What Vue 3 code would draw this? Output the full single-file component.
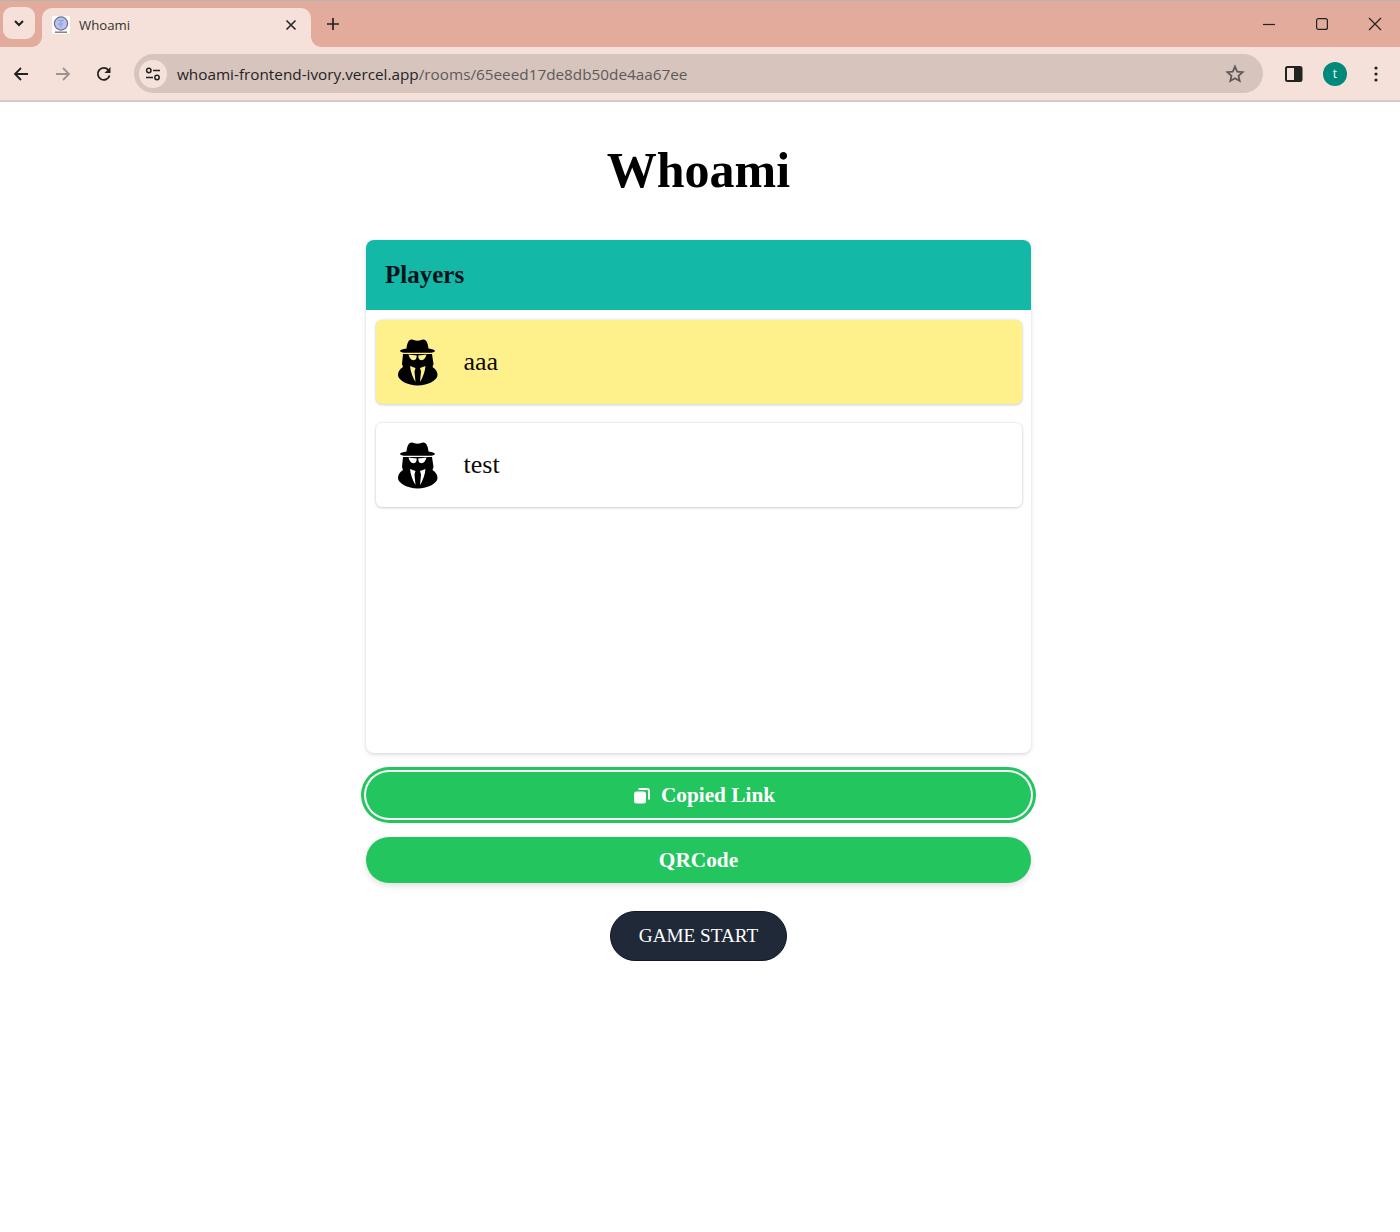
<template>
  <div class="browser">
    <div class="tabstrip">
      <button class="tab-search">
        <svg width="12" height="12" viewBox="0 0 12 12"><path d="M2 4l4 4 4-4" fill="none" stroke="#1f1f1f" stroke-width="2" /></svg>
      </button>
      <div class="tab">
        <svg class="favicon" width="18" height="18" viewBox="0 0 18 18">
          <rect width="18" height="18" fill="#fff" />
          <circle cx="9" cy="7.5" r="6.6" fill="#c5bdf0" stroke="#6a7290" stroke-width="1.2" />
          <path d="M6 4.5h6M9 4.5v7M6 8h5" stroke="#7fb2e0" stroke-width="1.4" fill="none" />
          <rect x="3" y="15.5" width="12" height="1.4" fill="#777" />
        </svg>
        <span class="tab-title">{{ tabTitle }}</span>
        <svg class="tab-close" width="12" height="12" viewBox="0 0 12 12"><path d="M1.5 1.5l9 9M10.5 1.5l-9 9" stroke="#2a2a2a" stroke-width="1.7" /></svg>
      </div>
      <svg class="new-tab" width="14" height="14" viewBox="0 0 14 14"><path d="M7 1v12M1 7h12" stroke="#222" stroke-width="1.7" /></svg>
      <div class="win-controls">
        <svg width="14" height="14" viewBox="0 0 14 14"><path d="M1 7.5h12" stroke="#222" stroke-width="1.2" /></svg>
        <svg width="14" height="14" viewBox="0 0 14 14"><rect x="1.6" y="1.6" width="10.8" height="10.8" rx="2" fill="none" stroke="#222" stroke-width="1.2" /></svg>
        <svg width="14" height="14" viewBox="0 0 14 14"><path d="M1 1l12 12M13 1L1 13" stroke="#222" stroke-width="1.2" /></svg>
      </div>
    </div>
    <div class="toolbar">
      <div class="nav-icons">
        <svg width="16" height="16" viewBox="0 0 16 16"><path d="M15 8H2.5M8 2L2 8l6 6" fill="none" stroke="#222" stroke-width="1.8" /></svg>
        <svg width="16" height="16" viewBox="0 0 16 16"><path d="M1 8h12.5M8 2l6 6-6 6" fill="none" stroke="#9a9490" stroke-width="1.8" /></svg>
        <svg width="16" height="16" viewBox="0 0 16 16"><path d="M13.6 9.5A6 6 0 1 1 12.4 4" fill="none" stroke="#222" stroke-width="1.8" /><path d="M14.5 1v6h-6z" fill="#222" /></svg>
      </div>
      <div class="omnibox">
        <div class="site-info">
          <svg width="16" height="14" viewBox="0 0 16 14">
            <circle cx="3.8" cy="3.5" r="2.2" fill="none" stroke="#222" stroke-width="1.5" />
            <path d="M8 3.5h7M1 10.5h7" stroke="#222" stroke-width="1.6" />
            <circle cx="12" cy="10.5" r="2.2" fill="none" stroke="#222" stroke-width="1.5" />
          </svg>
        </div>
        <span class="url">{{ urlHost }}<span class="url-path">{{ urlPath }}</span></span>
        <svg class="star" width="20" height="20" viewBox="0 0 20 20"><path d="M10 2.6l2.2 5 5.4.5-4.1 3.600 1.2 5.300L10 14.200l-4.700 2.800 1.200-5.300L2.400 8.100l5.400-.5z" fill="none" stroke="#5f5a58" stroke-width="1.8" /></svg>
      </div>
      <div class="tool-icons">
        <svg width="18" height="16" viewBox="0 0 18 16"><rect x="1" y="1" width="15.500" height="14" rx="1.500" fill="none" stroke="#222" stroke-width="2" /><rect x="9" y="1" width="8" height="14" fill="#222" /></svg>
        <div class="avatar">t</div>
        <svg width="4" height="16" viewBox="0 0 4 16"><circle cx="2" cy="2" r="1.600" fill="#222" /><circle cx="2" cy="8" r="1.600" fill="#222" /><circle cx="2" cy="14" r="1.600" fill="#222" /></svg>
      </div>
    </div>
  </div>

  <main class="page">
    <h1 class="title">Whoami</h1>

    <section class="card">
      <div class="card-header">Players</div>
      <ul class="player-list">
        <li v-for="p in players" :key="p.name" class="player" :class="{ me: p.me }">
          <svg class="spy" width="40" height="47" viewBox="0 0 40 47">
            <!-- hat -->
            <path d="M8.500 9.500C9 4.500 10.500 .4 13.500.4c2.200 0 3.800 1.300 6 1.300s3.800-1.300 6-1.300c3 0 4.500 4.100 5 9.100 3.500.6 6.500 1.500 6.500 2.400 0 .9-2 1.500-4 1.800H6c-2-.3-4-.9-4-1.800 0-.9 3-1.800 6.500-2.400z" fill="#000" />
            <!-- collar and coat -->
            <path d="M5 15h29l1.500 10-1 3C38 30 39.500 33 39.500 36c0 5-9.500 10.500-19.750 10.500S0 41 0 36c0-3 1.500-6 5-8l-1-3z" fill="#000" />
            <!-- glasses -->
            <path d="M10.500 15.500c2.500.5 5 .8 8 .8.6 2.300-.4 4.900-3 4.900-2.500 0-4.300-2.700-5-5.700zM28.500 15.500c-2.500.5-5 .8-8 .8-.6 2.300.4 4.900 3 4.900 2.500 0 4.300-2.700 5-5.700z" fill="currentColor" />
            <!-- lapels -->
            <path d="M12 27l5.500 2 -1 3.500 1 10.500c-2.500-4-5-10-5.500-16zM27.500 27l-5.500 2 1 3.500 -1 10.500c2.500-4 5-10 5.500-16z" fill="currentColor" />
          </svg>
          <span class="player-name">{{ p.name }}</span>
        </li>
      </ul>
    </section>

    <button class="link-btn focused">
      <svg width="16" height="16" viewBox="0 0 16 16">
        <rect x="0" y="3.500" width="12" height="12" rx="2.500" fill="#fff" />
        <path d="M4.500 1h8.500a2 2 0 0 1 2 2v8.500" fill="none" stroke="#fff" stroke-width="2" />
      </svg>
      Copied Link
    </button>
    <button class="link-btn">QRCode</button>
    <button class="start-btn">GAME START</button>
  </main>
</template>

<script setup>
import { ref } from 'vue'

const tabTitle = 'Whoami'
const urlHost = 'whoami-frontend-ivory.vercel.app'
const urlPath = '/rooms/65eeed17de8db50de4aa67ee'

const players = ref([
  { name: 'aaa', me: true },
  { name: 'test', me: false }
])
</script>

<style>
html, body {
  margin: 0;
  background: #fff;
}
</style>

<style scoped>
.browser {
  height: 102px;
  box-sizing: border-box;
  display: flex;
  flex-direction: column;
  border-top: 1px solid #b9b3b0;
  border-bottom: 2px solid #d6cbc7;
  font-family: "Open Sans", "Noto Sans", sans-serif;
}

.tabstrip {
  height: 46px;
  background: #e3ab9b;
  display: flex;
  align-items: flex-end;
}

.tab-search {
  width: 32px;
  height: 32px;
  margin: 0 7px 8px 3px;
  padding: 0;
  border: none;
  border-radius: 9px;
  background: #f5e1da;
  display: flex;
  align-items: center;
  justify-content: center;
}

.tab {
  width: 269px;
  height: 39px;
  box-sizing: border-box;
  padding: 0 14px 6px 10px;
  background: #f5e1da;
  border-radius: 10px 10px 0 0;
  display: flex;
  align-items: center;
  position: relative;
}

/* concave corners where the tab runs into the toolbar */
.tab::before,
.tab::after {
  content: "";
  position: absolute;
  bottom: 0;
  width: 10px;
  height: 10px;
}

.tab::before {
  left: -10px;
  background: radial-gradient(circle at 0 0, #e3ab9b 9.500px, #f5e1da 10px);
}

.tab::after {
  right: -10px;
  background: radial-gradient(circle at 100% 0, #e3ab9b 9.500px, #f5e1da 10px);
}

.favicon {
  flex: none;
}

.tab-title {
  margin-left: 9px;
  flex: 1;
  font-size: 13.2px;
  color: #333;
}

.new-tab {
  margin: 0 0 16px 15px;
}

.win-controls {
  margin-left: auto;
  margin-right: 18px;
  margin-bottom: 16px;
  display: flex;
  gap: 39px;
}

.toolbar {
  flex: 1;
  background: #f5e1da;
  display: flex;
  align-items: center;
}

.nav-icons {
  width: 134px;
  box-sizing: border-box;
  padding-left: 13px;
  display: flex;
  gap: 25.500px;
}

.omnibox {
  width: 1129px;
  height: 39px;
  background: #d7c5bd;
  border-radius: 20px;
  display: flex;
  align-items: center;
  box-sizing: border-box;
  padding: 0 18px 0 5px;
}

.site-info {
  width: 28px;
  height: 28px;
  border-radius: 50%;
  background: #f5e1da;
  display: flex;
  align-items: center;
  justify-content: center;
  flex: none;
}

.url {
  margin-left: 10px;
  flex: 1;
  font-size: 15.300px;
  color: #1f2328;
  white-space: nowrap;
}

.url-path {
  color: #5c5a5a;
}

.tool-icons {
  flex: 1;
  display: flex;
  align-items: center;
  padding-left: 21.500px;
}

.avatar {
  width: 24px;
  height: 24px;
  margin: 0 27px 0 20.500px;
  border-radius: 50%;
  background: #00897b;
  color: #fff;
  font-size: 12px;
  display: flex;
  align-items: center;
  justify-content: center;
}

.page {
  width: 665px;
  margin: 0 auto;
  position: relative;
  left: -1.500px;
  display: flex;
  flex-direction: column;
  align-items: center;
  font-family: "Liberation Serif", "Times New Roman", serif;
}

.title {
  margin: 41px 0 43px;
  font-size: 50px;
  line-height: 54px;
  font-weight: 700;
  color: #000;
}

.card {
  width: 100%;
  height: 513px;
  background: #fff;
  border-radius: 8px;
  box-shadow: 0 1px 3px rgba(0, 0, 0, 0.1), 0 2px 6px rgba(0, 0, 0, 0.08);
  overflow: hidden;
}

.card-header {
  height: 70px;
  box-sizing: border-box;
  padding-left: 19px;
  background: #14b8a6;
  display: flex;
  align-items: center;
  font-size: 25px;
  font-weight: 700;
  color: #04121c;
}

.player-list {
  list-style: none;
  margin: 0;
  padding: 10px 9.500px;
  display: flex;
  flex-direction: column;
  gap: 19px;
}

.player {
  height: 84px;
  box-sizing: border-box;
  padding-left: 22px;
  background: #fff;
  border-radius: 6px;
  box-shadow: 0 0 3px rgba(0, 0, 0, 0.12), 0 1px 3px rgba(0, 0, 0, 0.14);
  display: flex;
  align-items: center;
}

.player.me {
  background: #fef08a;
}

.spy {
  flex: none;
  color: #fff;
}

.me .spy {
  color: #fef08a;
}

.player-name {
  margin-left: 26px;
  font-size: 26px;
  color: #0b0b0b;
}

.link-btn {
  width: 100%;
  height: 46.500px;
  margin-top: 18.500px;
  padding: 2px 0 0;
  border: none;
  border-radius: 24px;
  background: #22c55e;
  color: #fff;
  font-family: inherit;
  font-size: 21.300px;
  font-weight: 700;
  display: flex;
  align-items: center;
  justify-content: center;
  gap: 11px;
  box-shadow: 0 3px 6px rgba(0, 0, 0, 0.12);
}

.link-btn.focused {
  padding-left: 12px;
  box-shadow: 0 0 0 2px #fff, 0 0 0 5px #22c55e;
}

.start-btn {
  width: 177px;
  height: 50px;
  margin-top: 28px;
  padding: 0;
  border: 1px solid #111827;
  border-radius: 25px;
  background: #1f2937;
  color: #fff;
  font-family: inherit;
  font-size: 19.200px;
}
</style>
